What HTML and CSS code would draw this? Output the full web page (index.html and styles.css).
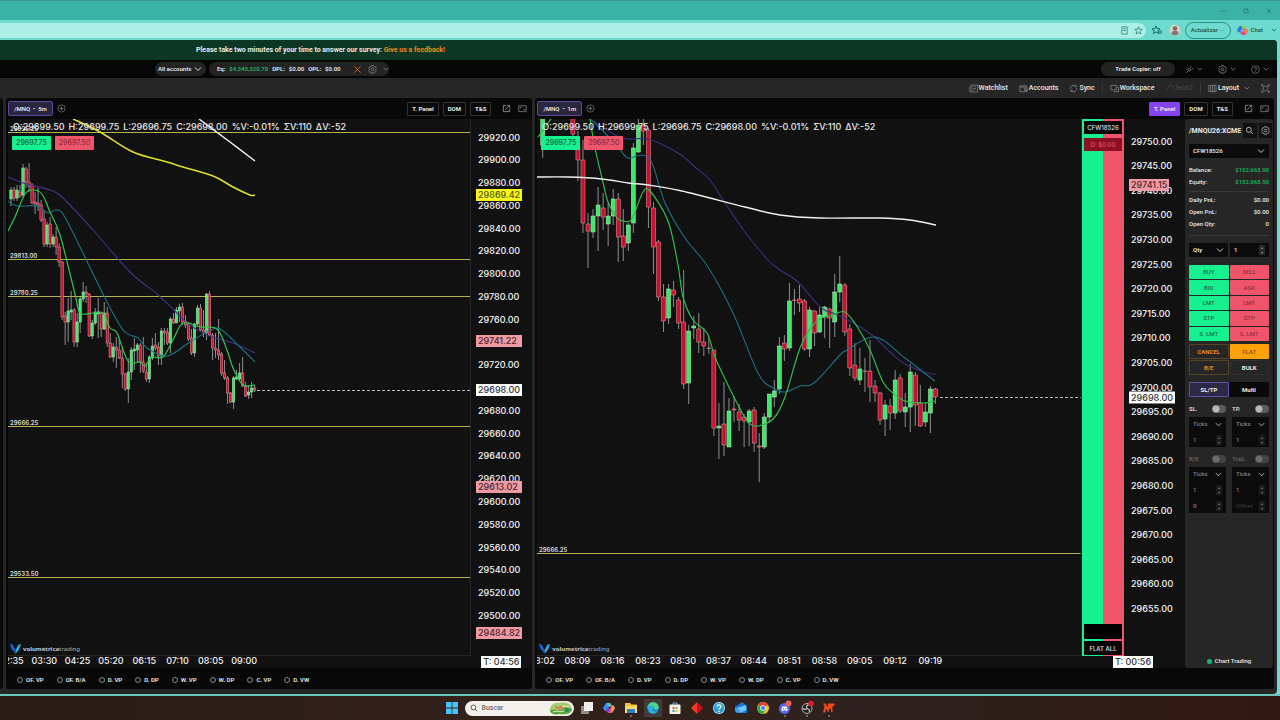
FILE: index.html
```html
<!DOCTYPE html>
<html lang="en">
<head>
<meta charset="utf-8">
<title>Volumetrica Trading</title>
<link rel="stylesheet" href="styles.css">
</head>
<body>
<svg class="defs" aria-hidden="true">
  <symbol id="chev" viewBox="0 0 8 8"><path d="M1 2.5 4 5.5 7 2.5" fill="none" stroke="currentColor"/></symbol>
  <symbol id="gear" viewBox="0 0 10 10"><path d="M3.8.8h2.4l.5 1.3 1.4-.2 1.1 2L8.300 5l.9 1.100-1.100 2-1.400-.2-.5 1.300H3.800l-.5-1.300-1.400.2-1.100-2L1.700 5l-.9-1.100 1.100-2 1.400.2z" fill="none" stroke="currentColor" stroke-width=".8"/><circle cx="5" cy="5" r="1.500" fill="none" stroke="currentColor" stroke-width=".8"/></symbol>
  <symbol id="plus" viewBox="0 0 10 10"><circle cx="5" cy="5" r="4" fill="none" stroke="currentColor" stroke-width=".7"/><path d="M5 3v4M3 5h4" stroke="currentColor" stroke-width=".8"/></symbol>
  <symbol id="open" viewBox="0 0 10 10"><path d="M5 1.500H1.500v7h7V5M6 1.500h2.500V4M3.500 6.500l5-5" fill="none" stroke="currentColor"/></symbol>
  <symbol id="expand" viewBox="0 0 10 10"><path d="M.8 2h8.400v6.500H.8zM2.500 5V3.700H4M7.500 5.500v1.300H6" fill="none" stroke="currentColor" stroke-width=".8"/></symbol>
  <symbol id="logo" viewBox="0 0 12 12"><path d="M0 1l3 1 3 6v4L2 7z" fill="#2563d8"/><path d="M12 1 9 2 6 8v4l4-5z" fill="#28a9dc"/><path d="M2 6l4 3v3z" fill="#123c86"/></symbol>
</svg>

<header class="titlebar">
  <button class="win" aria-label="Minimize"><svg viewBox="0 0 8 8"><path d="M1.500 4h5" stroke="currentColor" stroke-width=".7"/></svg></button>
  <button class="win" aria-label="Maximize"><svg viewBox="0 0 8 8"><path d="M2 2h4v4H2z" fill="none" stroke="currentColor" stroke-width=".7"/></svg></button>
  <button class="win" aria-label="Close"><svg viewBox="0 0 8 8"><path d="M2 2l4 4M6 2 2 6" stroke="currentColor" stroke-width=".7"/></svg></button>
</header>
<div class="address">
  <div class="field">
    <svg viewBox="0 0 10 10"><path d="M2 1h6v8H2zM3.500 3.200h3M3.500 5h3" fill="none" stroke="#1c7a70" stroke-width=".8"/></svg>
    <svg viewBox="0 0 10 10"><path d="M5 .8 6.200 3.600l3 .2-2.300 2 .8 3L5 7.200 2.300 8.800l.8-3-2.300-2 3-.2z" fill="none" stroke="#1c7a70" stroke-width=".8"/></svg>
  </div>
  <svg class="fav" viewBox="0 0 10 10"><path d="M4 1 5 3.500l3 .2L6 5.500l.6 3L4 7 1.500 8.500 2 5.500 0 4l3-.5zM7 6h3M7 8h3" fill="none" stroke="#125f57" stroke-width=".9"/></svg>
  <svg class="avatar" viewBox="0 0 12 12"><circle cx="6" cy="6" r="5.500" fill="#d5cfc9"/><circle cx="6" cy="4.500" r="2.200" fill="#87605a"/><path d="M2.500 10a3.500 3.200 0 0 1 7 0 5.500 5.500 0 0 1-7 0" fill="#8d6f73"/></svg>
  <button class="update">Actualizar ···</button>
  <button class="chat"><svg viewBox="0 0 12 12"><path d="M3 1h4l2 4H5L4 8H1L0 5z" fill="#2c7be5"/><path d="M5 1h3l1 4H6z" fill="#8ad14d"/><path d="M9 11H5L3 7h4l1-3h3l1 3z" fill="#e0489b"/><path d="M9 4h2l1 3-2 3-2-2z" fill="#f08a3c"/></svg>Chat</button>
  <svg class="chev teal"><use href="#chev"/></svg>
</div>

<main class="app">
  <div class="survey">Please take two minutes of your time to answer our survey: <a href="#">Give us a feedback!</a></div>
  <div class="topbar">
    <button class="pill accounts">All accounts <svg class="chev"><use href="#chev"/></svg></button>
    <div class="pill totals"><span>Eq:</span><span class="pos">$4,345,320.70</span><span>DPL:</span><span>$0.00</span><span>OPL:</span><span>$0.00</span>
      <svg class="ico orange" viewBox="0 0 10 10"><path d="M1.500 1.500l7 7M8.500 1.500l-7 7" stroke="currentColor"/></svg><svg class="ico"><use href="#gear"/></svg><svg class="chev small"><use href="#chev"/></svg></div>
    <button class="pill copier">Trade Copier: off</button>
    <button class="drop" aria-label="Connection"><svg class="ico" viewBox="0 0 10 10"><path d="M1.500 8.500 3 7M3 5l2 2 1.500-1.500-2-2zM5.500 3 7 1.500M7.500 5 9 3.500" fill="none" stroke="currentColor"/></svg><svg class="chev small"><use href="#chev"/></svg></button>
    <button class="drop" aria-label="Settings"><svg class="ico"><use href="#gear"/></svg><svg class="chev small"><use href="#chev"/></svg></button>
    <button class="drop" aria-label="Help"><svg class="ico" viewBox="0 0 10 10"><circle cx="5" cy="5" r="4.300" fill="none" stroke="currentColor" stroke-width=".7"/><path d="M3.700 4c0-1.700 2.600-1.700 2.600 0 0 .9-1.300 1-1.300 2M5 7v.8" fill="none" stroke="currentColor" stroke-width=".8"/></svg><svg class="chev small"><use href="#chev"/></svg></button>
  </div>
  <nav class="toolbar">
    <button><svg class="ico" viewBox="0 0 10 10"><path d="M2.500 1h7v8H1V3h1.500zM2.500 3v6M4 3h4M4 5h4M4 7h3" fill="none" stroke="currentColor" stroke-width=".7"/></svg>Watchlist</button>
    <button><svg class="ico" viewBox="0 0 10 10"><path d="M1 2v6.500h8V3.500H2.500L1 2h7v1.500M6 5.500h3M6 5v2h3" fill="none" stroke="currentColor" stroke-width=".8"/></svg>Accounts</button>
    <button><svg class="ico" viewBox="0 0 10 10"><path d="M1.500 5.500a3.500 3.500 0 0 1 6-3M8.500 4.500a3.500 3.500 0 0 1-6 3M6 3h2V1M4 7H2v2" fill="none" stroke="currentColor" stroke-width=".8"/></svg>Sync</button>
    <i class="sep"></i>
    <button><svg class="ico" viewBox="0 0 10 10"><path d="M1 1.500h6v5H1zM8 3.500h1.500v5H4" fill="none" stroke="currentColor" stroke-width=".8"/></svg>Workspace</button>
    <button class="dim"><svg class="ico" viewBox="0 0 10 10"><path d="M2 7a2 2 0 0 1 1-3.500 2.500 2.500 0 0 1 5 .5 1.700 1.700 0 0 1 0 3" fill="none" stroke="currentColor"/></svg>leon2</button>
    <i class="sep"></i>
    <button><svg class="ico" viewBox="0 0 10 10"><path d="M1 1.500h8v7H1zM3 1.500v7M5 1.500v7M7 1.500v7" fill="none" stroke="currentColor" stroke-width=".8"/></svg>Layout <svg class="chev small"><use href="#chev"/></svg></button>
    <button aria-label="Full screen"><svg class="ico" viewBox="0 0 10 10"><path d="M2.500 2.500h5v5h-5zM.8.8l1.700 1.700M9.200.8 7.500 2.500M.8 9.200l1.700-1.700M9.200 9.200 7.500 7.500M.8 2.500V.8h1.700M7.500.8h1.700v1.700M.8 7.500v1.700h1.700M7.500 9.200h1.700V7.500" fill="none" stroke="currentColor" stroke-width=".7"/></svg></button>
  </nav>

  <div class="workspace">
    <div class="edge"></div>
    <section class="panel five">
      <div class="head"><button class="tab">/MNQ &nbsp;•&nbsp; 5m</button><button class="bare" aria-label="Add chart"><svg class="ico"><use href="#plus"/></svg></button><span class="grow"></span>
        <button class="box">T. Panel</button><button class="box">DOM</button><button class="box">T&amp;S</button>
        <button class="bare open" aria-label="Open"><svg class="ico"><use href="#open"/></svg></button><button class="bare" aria-label="Expand"><svg class="ico"><use href="#expand"/></svg></button></div>
      <div class="body">
        <div class="plot"><svg id="plot5"></svg>
          <div class="readout"><span>O:29699.50</span><span>H:29699.75</span><span>L:29696.75</span><span>C:29698.00</span><span>%V:-0.01%</span><span>ΣV:110</span><span>ΔV:-52</span></div>
          <div class="quotes"><button class="ask">29697.75</button><button class="bid">29697.50</button></div>
          <div class="brand"><svg><use href="#logo"/></svg><span><b>volumetrica</b>trading</span></div>
        </div>
        <div class="axis"><svg id="axis5"></svg></div>
      </div>
      <div class="times"><svg id="time5"></svg><span class="count">T: 04:56</span></div>
      <div class="studies"></div>
    </section>

    <section class="panel one">
      <div class="head"><button class="tab">/MNQ &nbsp;•&nbsp; 1m</button><button class="bare" aria-label="Add chart"><svg class="ico"><use href="#plus"/></svg></button><span class="grow"></span>
        <button class="box on">T. Panel</button><button class="box">DOM</button><button class="box">T&amp;S</button>
        <button class="bare open" aria-label="Open"><svg class="ico"><use href="#open"/></svg></button><button class="bare" aria-label="Expand"><svg class="ico"><use href="#expand"/></svg></button></div>
      <div class="split">
        <div class="left">
          <div class="body">
            <div class="plot"><svg id="plot1"></svg>
              <div class="readout"><span>O:29699.50</span><span>H:29699.75</span><span>L:29696.75</span><span>C:29698.00</span><span>%V:-0.01%</span><span>ΣV:110</span><span>ΔV:-52</span></div>
              <div class="quotes"><button class="ask">29697.75</button><button class="bid">29697.50</button></div>
              <div class="brand"><svg><use href="#logo"/></svg><span><b>volumetrica</b>trading</span></div>
            </div>
            <div class="ladder"><span class="acct">CFW18526</span><span class="day">D: $0.00</span><span class="grow"></span><span class="blank"></span><button class="acct flatall">FLAT ALL</button></div>
            <div class="axis"><svg id="axis1"></svg></div>
          </div>
          <div class="times"><svg id="time1"></svg><span class="count">T: 00:56</span></div>
        </div>
        <aside class="ticket">
          <div class="symbol"><b>/MNQU26:XCME</b><button aria-label="Search"><svg class="ico" viewBox="0 0 10 10"><circle cx="4.300" cy="4.300" r="2.800" fill="none" stroke="currentColor"/><path d="M6.500 6.500 9 9" stroke="currentColor"/></svg></button><button aria-label="Ticket settings"><svg class="ico"><use href="#gear"/></svg></button></div>
          <select class="dd acctsel" aria-label="Account"><option>CFW18526</option></select>
          <dl class="stats"><dt>Balance:</dt><dd class="pos">$152,963.90</dd><dt>Equity:</dt><dd class="pos">$152,963.90</dd></dl>
          <dl class="stats"><dt>Daily PnL:</dt><dd>$0.00</dd><dt>Open PnL:</dt><dd>$0.00</dd><dt>Open Qty:</dt><dd>0</dd></dl>
          <div class="pair qty"><select class="dd" aria-label="Quantity type"><option>Qty</option></select><span class="num"><input aria-label="Quantity" value="1"><i>▴<br>▾</i></span></div>
          <div class="orders">
            <button class="g">BUY</button><button class="r">SELL</button><button class="g">BID</button><button class="r">ASK</button><button class="g">LMT</button><button class="r">LMT</button><button class="g">STP</button><button class="r">STP</button><button class="g">S. LMT</button><button class="r">S. LMT</button>
          </div>
          <div class="actions"><button class="cancel">CANCEL</button><button class="flat">FLAT</button><button class="cancel">B/E</button><button class="bulk">BULK</button></div>
          <div class="modes"><button class="sel">SL/TP</button><button>Multi</button></div>
          <div class="bracket">
            <div><label>SL.<input type="checkbox" class="switch"></label><div class="group"><select class="dd" aria-label="SL unit"><option>Ticks</option></select><span class="num"><input aria-label="SL value" value="1"><i>▴<br>▾</i></span></div></div>
            <div><label>TP.<input type="checkbox" class="switch"></label><div class="group"><select class="dd" aria-label="TP unit"><option>Ticks</option></select><span class="num"><input aria-label="TP value" value="1"><i>▴<br>▾</i></span></div></div>
          </div>
          <div class="bracket off">
            <div><label>B/E<input type="checkbox" class="switch"></label><div class="group"><select class="dd" aria-label="B/E unit"><option>Ticks</option></select><span class="num"><input aria-label="B/E value" value="1"><i>▴<br>▾</i></span><span class="num"><input aria-label="B/E offset" value="0"><i>▴<br>▾</i></span></div></div>
            <div><label>Trail.<input type="checkbox" class="switch"></label><div class="group"><select class="dd" aria-label="Trail unit"><option>Ticks</option></select><span class="num"><input aria-label="Trail value" value="1"><i>▴<br>▾</i></span><span class="num"><input aria-label="Trail offset" placeholder="Offset"><i>▴<br>▾</i></span></div></div>
          </div>
          <div class="status"><i></i>Chart Trading</div>
        </aside>
      </div>
      <div class="studies"></div>
    </section>
  </div>
</main>

<footer class="taskbar">
  <svg viewBox="0 0 12 12"><path d="M0 0h5.600v5.600H0zM6.400 0H12v5.600H6.400zM0 6.400h5.600V12H0zM6.400 6.400H12V12H6.400z" fill="#47c3f5"/></svg>
  <div class="search"><svg viewBox="0 0 10 10"><circle cx="4.300" cy="4.300" r="3" fill="none" stroke="#333"/><path d="M6.500 6.500 9 9" stroke="#333"/></svg><input placeholder="Buscar" aria-label="Buscar">
    <svg class="art" viewBox="0 0 26 14"><path d="M2 10C1 5 6 1 11 2c6-2 12 1 13 6-1 5-8 6-13 5-4 1-8 0-9-3z" fill="#a4cf74"/><path d="M2 10c4-4 8 2 12-2s7-1 10 0c0 5-8 6-13 5-4 1-8 0-9-3z" fill="#55a541"/><path d="M6 4l4 2 4-2 3 3-4 2-5-1z" fill="#cf8a5a"/><path d="M5 11c4-2 7 1 11-1M14 5l7 1" stroke="#e7f2c0" fill="none"/><circle cx="19" cy="9" r="2" fill="#2f8c57"/></svg></div>
  <svg viewBox="0 0 12 12"><path d="M0 4h8v8H0z" fill="#8e8a88"/><path d="M3 0h9v9H3z" fill="#f1efee"/></svg>
  <svg viewBox="0 0 12 12"><path d="M3 1h4l2 3-4 1-1 4H2L0 6z" fill="#3a8ff0"/><path d="M7 1l2 3-4 1-1-4z" fill="#53c6c2"/><path d="M9 11H5L3 8l4-1 1-4h2l2 3z" fill="#df4b94"/><path d="M10 3l2 3-3 5-1-4z" fill="#f3a23e"/><path d="M2 9l3-4 2 2-1 3z" fill="#7546d3"/></svg>
  <svg class="run" viewBox="0 0 12 12"><path d="M0 1h5l1.500 1.500H12V11H0z" fill="#f4bd32"/><path d="M0 4h12v7H0z" fill="#ffd86a"/><path d="M2 7h8v4H2z" fill="#2d7fd0"/><path d="M5 14h2" stroke="#aaa"/></svg>
  <svg class="run current" viewBox="0 0 12 12"><circle cx="6" cy="6" r="5.800" fill="#1b7fcf"/><path d="M.3 5C1 1.500 4-.3 7 .3c3 .5 5 3 4.800 5.500C11 8 8 8 7 7c1-2-1-3.500-3-3S1 5 .3 5z" fill="#52d38f"/><path d="M.3 5c2-3 7-2 6.500 1C5 6 5 9 8 9.500c1 .2 2-.1 3-.6-2 3-6 3.500-8.500 1.600" fill="#2ab6dc"/><path d="M2 14.500h8" stroke="#6cc6e8"/></svg>
  <svg viewBox="0 0 12 12"><path d="M4 3V1h4v2" fill="none" stroke="#5cb8e8"/><rect x=".5" y="2.500" width="11" height="9.500" rx="1" fill="#f5f3f0"/><path d="M3.500 5h2v2h-2z" fill="#ee5b35"/><path d="M6.500 5h2v2h-2z" fill="#6eb83c"/><path d="M3.500 8h2v2h-2z" fill="#2a9de0"/><path d="M6.500 8h2v2h-2z" fill="#f5b722"/></svg>
  <svg viewBox="0 0 12 12"><path d="M6 0v12L0 6z" fill="#f03a24"/><path d="M6 0l6 6-6 6z" fill="#c90f22"/></svg>
  <svg viewBox="0 0 12 12"><circle cx="6" cy="6" r="6" fill="#d7edf7"/><circle cx="6" cy="6" r="5.300" fill="#27a0d4"/><path d="M4.200 4.700c0-2.600 3.700-2.300 3.700-.2C7.900 6 6 5.800 6 7.500M6 8.800V10" fill="none" stroke="#fff" stroke-width="1.300"/></svg>
  <svg viewBox="0 0 12 12"><path d="M0 5l7-5 5 4v7H2L0 9z" fill="#1977d2"/><path d="M2 6l9-3v5l-6 3z" fill="#6cc8f4"/><path d="M0 5l6 4-4 2-2-2z" fill="#3a9cec"/></svg>
  <svg viewBox="0 0 12 12"><circle cx="6" cy="6" r="6" fill="#f3c32e"/><path d="M6 6 .8 3A6 6 0 0 1 11.200 3z" fill="#df4335"/><path d="M6 6 .8 3A6 6 0 0 0 6 12l3-5z" fill="#34a353"/><circle cx="6" cy="6" r="2.800" fill="#fff"/><circle cx="6" cy="6" r="2.100" fill="#3f7fe8"/></svg>
  <svg class="run" viewBox="0 0 12 12"><circle cx="5.500" cy="6.500" r="5.500" fill="#5865e8"/><path d="M2.500 8.500C2.500 6 3 4.500 4 4.500h3c1 0 1.500 1.500 1.500 4l-1.500.8-.6-1H4.600l-.6 1z" fill="#fff"/><circle cx="4.400" cy="6.800" r=".7" fill="#5865e8"/><circle cx="6.600" cy="6.800" r=".7" fill="#5865e8"/><circle cx="9.500" cy="1.500" r="3" fill="#e8605f"/><path d="M5 14h2" stroke="#aaa"/></svg>
  <svg class="run" viewBox="0 0 12 12"><circle cx="6" cy="6.500" r="5" fill="#1d1d1f" stroke="#b9b7b5"/><path d="M6 6.500C5 4 6 2.500 8 3M6 6.500c2.500.5 3 2 2 3.500M6 6.500C4 8 2.500 7.500 2 6" fill="none" stroke="#c9c7c5" stroke-width="1.200"/><circle cx="10" cy="1.500" r="2.800" fill="#dc1f26"/><path d="M5 14h2" stroke="#aaa"/></svg>
  <svg class="run" viewBox="0 0 12 12"><path d="M0 1.500h2.500L5 5V1.500h7L11 4H9.500v6.500L8 10V7L6.500 6.500l-1 4L3 6.500l-.5 4H0L1.500 4z" fill="#ee4a1c"/><path d="M5 14h2" stroke="#aaa"/></svg>
</footer>
<script src="chart.js"></script>
</body>
</html>
```
FILE: styles.css
```css
* { box-sizing: border-box; }
body { margin: 0; height: 100vh; display: flex; flex-direction: column; overflow: hidden; background: #6ddbcd; font: 500 6px/8px Roboto, "Liberation Sans", sans-serif; color: #e8e8e8; }
button, input, select { font: inherit; color: inherit; background: none; border: 0; padding: 0; margin: 0; min-width: 0; }
button { white-space: nowrap; }
svg { display: block; flex: none; }
a { text-decoration: none; }
.defs { position: absolute; width: 0; height: 0; }
.grow { flex: 1; }
.ico { width: 9px; height: 9px; color: #8d8d8d; }
.chev { width: 8px; height: 8px; }
.chev.small { width: 6px; height: 6px; color: #8d8d8d; }
.pos { color: #20b963; }

.titlebar { flex: none; height: 20px; background: #3bb2a6; border-top: 1px solid #3c9c92; display: flex; justify-content: flex-end; align-items: center; gap: 15px; padding-right: 7px; color: #1b7168; }
.win svg { width: 8px; height: 8px; }
.address { flex: none; height: 20px; display: flex; align-items: center; background: #6ddbcd; padding-right: 3px; color: #17514b; }
.field { flex: 1; height: 15px; background: #adefe6; border-radius: 0 8px 8px 0; display: flex; align-items: center; justify-content: flex-end; gap: 5px; padding-right: 3px; }
.field svg { width: 9px; height: 9px; }
.fav { width: 10px; height: 10px; margin-left: 6px; }
.avatar { width: 12px; height: 12px; margin: 0 4px 0 7px; }
.update { height: 17px; width: 46px; border: 1px solid #2a8c80; border-radius: 9px; }
.chat { display: flex; align-items: center; gap: 3px; margin: 0 8px 0 6px; }
.chat svg { width: 11px; height: 11px; }
.chev.teal { width: 6px; height: 6px; }

.app { flex: 1; min-height: 0; display: flex; flex-direction: column; background: #262626; margin-right: 3px; border-radius: 0 4px 4px 0; overflow: hidden; }
.survey { flex: none; height: 20px; background: #0d3725; padding-left: 196px; font-size: 7px; line-height: 20px; font-weight: 700; }
.survey a { color: #e88a1c; }
.topbar { flex: none; height: 18px; background: #060606; display: flex; align-items: center; padding: 0 8px 0 155px; }
.pill { height: 14px; border-radius: 7px; background: #232323; display: flex; align-items: center; font-weight: 600; }
.accounts { width: 51px; justify-content: space-between; padding: 0 4px 0 3px; }
.totals { width: 180px; gap: 4px; padding: 0 8px; margin: 0 auto 0 3px; }
.totals .orange { color: #c9742a; margin-left: 8px; }
.totals .ico { margin-right: 2px; }
.copier { width: 74px; justify-content: center; margin-right: 5px; }
.drop { display: flex; align-items: center; gap: 3px; margin-left: 5px; width: 18px; }
.drop + .drop { margin-left: 15px; }
.toolbar { flex: none; height: 20px; display: flex; align-items: center; justify-content: flex-end; gap: 11px; padding-right: 7px; font-size: 7px; }
.toolbar button { display: flex; align-items: center; gap: 1px; }
.toolbar button .chev { margin-left: 4px; }
.toolbar .sep { width: 1px; height: 10px; background: #3a3a3a; margin: 0 -4px; }
.toolbar .dim, .toolbar .dim .ico { color: #454545; }

.workspace { flex: 1; min-height: 0; display: flex; gap: 3px; padding: 0 3px 5px 0; }
.edge { width: 3px; background: #0a0a0a; border-radius: 0 3px 3px 0; }
.panel { min-width: 0; display: flex; flex-direction: column; background: #080808; border-radius: 3px; padding-left: 2px; }
.five { flex: 526; }
.one { flex: 739; }
.head { flex: none; height: 21px; display: flex; align-items: center; gap: 4px; padding-right: 5px; }
.tab { height: 15px; width: 45px; border: 1px solid #5c489c; border-radius: 2px; background: #2a2640; font-weight: 600; }
.head .box { height: 14px; padding: 0 4px; border: 1px solid #333; border-radius: 1px; font-weight: 700; }
.head .box.on { background: #8344f0; border-color: #8344f0; }
.bare.open { margin: 0 3px 0 7px; }
.body { flex: 1; min-height: 0; display: flex; background: #111; }
.plot { position: relative; flex: 1; min-width: 0; overflow: hidden; border-right: 1px solid #262626; border-bottom: 1px solid #262626; }
.plot > svg, .axis svg { width: 100%; height: 100%; position: absolute; inset: 0; }
.axis { flex: none; width: 61px; position: relative; }
.plot, .axis, .times, .ladder { font-family: Inter, "Liberation Sans", sans-serif; }
.axis text, .times text { font-size: 9px; fill: #f4f4f4; }
.plot text { font-size: 6px; font-weight: 600; fill: #ddd; }
.readout { position: absolute; top: 2px; left: 5px; display: flex; gap: 4px; font-size: 9px; line-height: 12px; white-space: nowrap; }
.quotes { position: absolute; top: 17px; left: 4px; display: flex; gap: 4px; font-size: 7px; }
.quotes button { width: 39px; height: 14px; border-radius: 1px; color: #17603f; background: #16f08f; }
.quotes .bid { background: #ee556b; color: #902c3c; }
.brand { position: absolute; left: 2px; bottom: 1px; display: flex; gap: 2px; align-items: center; color: #8fa0b4; font-family: "Noto Sans", sans-serif; }
.brand b { font-weight: 700; color: #c3ccd8; }
.brand svg { width: 11px; height: 11px; }
.times { flex: none; height: 12px; background: #111; position: relative; overflow: hidden; }
.times svg { width: 100%; height: 12px; }
.count { position: absolute; right: 11px; top: 0; width: 40px; height: 12px; background: #fff; color: #333; font-size: 9px; line-height: 12px; text-align: center; }
.one .count { right: 32px; }
.studies { flex: none; height: 21px; display: flex; align-items: center; gap: 13px; padding: 3px 0 0 9px; font-weight: 600; }
.studies label { display: flex; align-items: center; gap: 3px; }
.studies input { appearance: none; width: 6px; height: 6px; border: 1px solid #888; border-radius: 50%; }

.split { flex: 1; min-height: 0; display: flex; }
.left { flex: 1; min-width: 0; display: flex; flex-direction: column; }
.ladder { flex: none; width: 42px; display: flex; flex-direction: column; padding: 2px 2px 1px; background: linear-gradient(90deg, #16f08f 50%, #ee556b 50%); }
.ladder > * { text-align: center; line-height: 13px; }
.ladder .acct { height: 13px; background: #060606; color: #dfe4f2; }
.ladder .day { height: 13px; margin-top: 4px; background: #8c1023; color: #e2576c; }
.ladder .blank { height: 15px; background: #000; margin-bottom: 2px; }
.ladder .flatall { height: 14px; }

.ticket { flex: none; width: 88px; background: #262626; border-radius: 3px; margin-right: 1px; padding: 4px 4px 3px; display: flex; flex-direction: column; }
.symbol { display: flex; align-items: center; height: 15px; gap: 2px; margin-right: -3px; }
.symbol b { font-size: 7px; font-weight: 700; flex: 1; }
.symbol button { width: 14px; height: 15px; background: #101010; display: grid; place-items: center; }
.symbol .ico { color: #bbb; }
.dd { appearance: none; height: 14px; width: 100%; padding: 0 4px; font-weight: 600; border-radius: 1px; background: #0b0b0b url("data:image/svg+xml,%3Csvg xmlns='http://www.w3.org/2000/svg' viewBox='0 0 8 8'%3E%3Cpath d='M1 2.500 4 5.500 7 2.500' fill='none' stroke='%23ccc'/%3E%3C/svg%3E") no-repeat right 4px center / 8px 8px; }
.acctsel { margin: 6px 0; }
.stats { margin: 0; display: grid; grid-template-columns: auto auto; line-height: 12px; padding-bottom: 3px; margin-bottom: 2px; border-bottom: 1px solid #383838; }
.stats dd { margin: 0; text-align: right; }
.stats + .stats { padding-bottom: 5px; }
.pair, .bracket, .modes, .actions { display: grid; grid-template-columns: 1fr 1fr; gap: 2px; }
.qty { margin: 5px 0 8px; }
.num { display: flex; align-items: center; height: 14px; background: #0b0b0b; padding: 0 4px; }
.num input { flex: 1; width: 0; outline: 0; }
.num input::placeholder { color: #333; }
.num i { font: 4px/5px "DejaVu Sans", sans-serif; color: #999; background: #2a2a2a; padding: 0 2px; }
.orders { display: grid; grid-template-columns: 1fr 1fr; gap: 1px; height: 76px; margin-bottom: 3px; }
.orders button { border-radius: 1px; }
.g { background: #16f08f; color: #17704a; }
.r { background: #ee556b; color: #962e3f; }
.actions { gap: 1px; margin-bottom: 7px; }
.actions button, .modes button { height: 15px; border-radius: 1px; font-weight: 700; }
.actions .cancel { border: 1px solid #554522; color: #ef8521; }
.actions .flat { background: #ffa20a; color: #9a5b05; }
.actions .bulk { border: 1px solid #2f2f2f; }
.modes { gap: 0; margin-bottom: 7px; }
.modes button { background: #080808; }
.modes .sel { background: #2d2843; border: 1px solid #6450a8; }
.bracket { gap: 6px; }
.bracket label { display: flex; justify-content: space-between; align-items: center; height: 10px; margin-bottom: 3px; }
.switch { appearance: none; width: 14px; height: 8px; border-radius: 4px; background: radial-gradient(circle at 4px 4px, #b8b8b8 3px, #5c5c5c 4px); }
.group { background: #0b0b0b; color: #858585; }
.group .dd { display: block; background-color: transparent; background-size: 7px 7px; font-weight: 500; }
.group .num { background: none; margin-top: 2px; }
.group .num i { background: #1b1b1b; color: #777; }
.bracket.off { margin-top: 7px; color: #666; }
.off .switch { background: radial-gradient(circle at 4px 4px, #6b6b6b 3px, #444 4px); }
.status { margin-top: auto; display: flex; align-items: center; justify-content: center; gap: 3px; height: 8px; }
.status i { width: 5px; height: 5px; border-radius: 50%; background: #16b870; }

.taskbar { flex: none; height: 26px; background: linear-gradient(#6cc5b9 0 2px, transparent 2px), linear-gradient(90deg, #2b1c18, #33211a 40%, #2e211e 70%, #30190f); display: flex; align-items: center; justify-content: center; gap: 10px; padding-top: 2px; }
.taskbar > svg { width: 12px; height: 12px; }
.search { width: 109px; height: 15px; margin: 0 -3px 0 -3px; border-radius: 8px; background: #f4f1ed; display: flex; align-items: center; padding-left: 5px; gap: 4px; }
.search svg { width: 8px; height: 8px; }
.search input { flex: 1; width: 0; font-size: 7px; color: #555; }
.search input::placeholder { color: #666; }
.search .art { width: 26px; height: 14px; }
.taskbar .run { overflow: visible; }
.taskbar .current { outline: 3px solid #433a39; background: #433a39; }
```
FILE: chart.js
```js
const NS = 'http://www.w3.org/2000/svg';
function el(parent, name, attrs, text) {
  const n = document.createElementNS(NS, name);
  for (const k in attrs) n.setAttribute(k, attrs[k]);
  if (text !== undefined) n.textContent = text;
  parent.appendChild(n);
  return n;
}

// Candles: [slot, up, body top, body bottom, wick top, wick bottom]
const five = [
 [1,190,199,187,206],[0,190,198,187,201],[1,190,198,185,201],[0,192,196,185,198],[1,168,195,164,197],[0,169,182,167,188],[0,182,186,163,192],[0,185,203,183,204],[0,202,204,192,214],[0,203,205,188,211],
 [0,205,220,200,222],[0,219,244,210,247],[1,225,244,222,247],[0,224,244,217,248],[1,237,244,234,247],[0,237,247,227,255],[0,247,262,243,267],[0,262,317,261,320],[0,316,322,312,345],[1,311,322,298,342],
 [1,310,312,291,320],[0,310,342,308,347],[1,322,342,313,347],[1,299,322,297,333],[1,292,299,282,302],[0,292,294,286,303],[0,294,336,293,337],[1,323,336,320,339],[1,312,323,308,325],[1,312,314,298,338],
 [0,313,329,312,337],[1,313,329,302,330],[0,313,343,307,347],[0,343,357,333,358],[1,347,357,343,362],[0,347,350,337,368],[0,350,358,338,359],[0,358,374,348,388],[0,374,389,373,391],[1,372,389,358,403],
 [1,350,372,347,380],[1,349,351,338,370],[1,345,350,343,362],[0,345,362,343,373],[0,362,371,337,373],[0,372,379,363,382],[1,357,379,355,383],[1,346,358,338,360],[0,345,348,333,350],[0,347,356,342,365],
 [1,331,356,328,365],[0,331,333,328,345],[0,332,343,328,345],[1,319,343,317,353],[0,319,323,313,324],[1,310,323,307,323],[1,307,311,304,322],[0,307,322,303,325],[0,321,325,315,328],[0,324,339,322,341],
 [0,338,353,329,355],[1,324,353,323,357],[1,308,324,305,327],[0,308,330,304,332],[0,330,333,310,337],[1,294,333,293,340],[0,294,335,291,336],[0,335,348,333,360],[0,348,350,333,358],[0,350,355,319,360],
 [0,354,373,352,376],[0,373,378,360,380],[0,378,393,376,404],[0,393,402,392,403],[1,378,402,376,409],[1,377,379,370,380],[1,373,379,363,380],[0,373,386,357,387],[0,386,396,382,397],[1,392,395,385,399],[1,388,392,382,398],[0,388,390,385,392]
].map((c, i) => [i, ...c]);
const one = [[0,1,110,145,110,158],
 ...[[0,110,134,110,140],[0,147,160,131,181],[0,160,223,140,233],[0,224,231,213,268],[1,216,232,209,238],[1,205,216,187,251],[0,208,217,193,230],[1,216,224,203,246],[1,199,216,189,225],[0,199,237,193,262],[0,236,247,209,261],[1,225,243,223,251],[1,148,223,143,233],[1,125,152,112,153],[0,125,131,119,145],[0,130,207,128,228],[0,208,247,202,274],[0,242,297,240,301],
 [0,297,321,284,332],[1,289,318,284,324],[0,290,295,281,307],[0,300,323,297,329],[0,322,384,270,389],[1,331,383,325,404],[1,326,328,316,339],[0,329,342,313,353],[0,342,346,328,356],[0,348,348,337,354],[0,350,428,350,436],[1,426,428,403,459],[0,424,445,382,456],[1,411,447,398,447],[0,409,410,396,422],[0,412,420,404,431],[0,417,421,414,447],[1,411,422,409,446],[0,410,443,407,452],[0,446,447,433,482],[1,417,447,413,449],
 [1,394,417,394,423],[1,391,397,380,407],[1,346,389,337,394],[0,343,349,335,361],[1,301,348,283,351],[0,300,300,289,315],[0,299,303,285,312],[0,301,349,299,351],[1,310,349,307,357],[0,311,333,310,346],[1,315,332,307,333],[1,307,317,306,338],[0,309,318,308,348],[1,292,322,274,337],[1,284,292,256,302],[0,285,332,283,336],
 [0,329,368,324,376],[0,365,378,343,381],[1,369,380,348,385],[0,371,371,358,392],[0,371,387,340,402],[0,386,393,380,402],[0,393,420,392,425],[1,405,419,400,436],[0,406,413,399,430],[1,380,413,370,419],[0,378,411,374,413],[1,407,412,393,427],[1,372,407,364,432],[0,375,405,372,426],[0,403,426,385,427],[1,412,422,403,427],[1,389,413,386,433],[0,389,397,388,404]].map((c, i) => [i + 6, ...c])];

function smooth(points) {
  const p = points.split(' ').map(s => s.split(',').map(Number));
  let d = `M${p[0]}`;
  for (let i = 1; i < p.length; i++) {
    const a = p[i - 2] || p[i - 1], b = p[i - 1], c = p[i], e = p[i + 1] || c;
    d += `C${b[0] + (c[0] - a[0]) / 6},${b[1] + (c[1] - a[1]) / 6} ${c[0] - (e[0] - b[0]) / 6},${c[1] - (e[1] - b[1]) / 6} ${c}`;
  }
  return d;
}

function drawPlot(id, o) {
  const svg = document.getElementById(id);
  for (const [y, label] of o.levels) {
    el(svg, 'line', { x1: 0, x2: '100%', y1: y - o.top, y2: y - o.top, stroke: '#b4b352' });
    el(svg, 'text', { x: 2, y: y - o.top - 2 }, label);
  }
  el(svg, 'line', { x1: o.lastX - o.left, x2: '100%', y1: o.lastY - o.top, y2: o.lastY - o.top, stroke: '#bbb', 'stroke-dasharray': '3 2' });
  const g = el(svg, 'g', { transform: `translate(${-o.left} ${-o.top})` });
  for (const [i, up, t, b, h, l] of o.candles) {
    const x = o.start + i * o.step;
    el(g, 'line', { x1: x, x2: x, y1: h, y2: l, stroke: '#9c9c9c', 'stroke-width': o.wick });
    el(g, 'rect', { x: x - o.w / 2, y: t, width: o.w, height: Math.max(b - t, .6), fill: up ? '#3fe56c' : '#c8102e', stroke: up ? '#b4efbd' : '#e9a0a8', 'stroke-width': .5 });
  }
  for (const [color, width, pts] of o.lines) el(g, 'path', { d: smooth(pts), fill: 'none', stroke: color, 'stroke-width': width });
}

function drawAxis(id, first, last, price, step, y, dy, tags) {
  const svg = document.getElementById(id);
  for (let i = 0; y + i * dy <= last; i++) el(svg, 'text', { x: 7, y: y + i * dy + 3 - first }, (price - i * step).toFixed(2));
  for (const [ty, bg, fg, label] of tags) {
    el(svg, 'rect', { x: 5, y: ty - 6 - first, width: label === '29741.15' ? 40 : 46, height: 12, fill: bg });
    el(svg, 'text', { x: 7, y: ty + 3 - first, style: `fill:${fg}` }, label);
  }
}

function drawTimes(id, x, dx, labels) {
  const svg = document.getElementById(id);
  labels.split(' ').forEach((t, i) => el(svg, 'text', { x: x + i * dx, y: 8, 'text-anchor': 'middle' }, t));
}

drawPlot('plot5', { left: 8, top: 119, start: 11, step: 3.008, w: 2.4, wick: .9, candles: five, lastX: 257, lastY: 390.5,
  levels: [[132.5, '29925.25'], [259.5, '29813.00'], [296.5, '29780.25'], [426.5, '29666.25'], [577.5, '29533.50']],
  lines: [
    ['#41348a', 1.1, '8,177 23,183 53,191 67,202 93,230 130,272 157,294 173,309 187,323 207,335 233,343 255,353'],
    ['#1a7488', 1.1, '8,201 17,206 37,206 48,213 57,210 67,221 103,294 123,330 138,338 147,348 167,356 190,342 213,329 223,331 240,347 255,362'],
    ['#2fc750', 1.2, '8,231 15,217 25,194 33,190 42,194 50,212 60,235 75,294 80,313 93,313 103,313 110,328 117,333 128,361 140,362 145,366 152,357 163,357 173,340 183,323 200,327 217,329 227,350 233,368 243,385 255,385'],
    ['#dde02f', 1.6, '73,119 100,132 133,152 167,162 183,167 213,176 233,187 250,195 255,195'],
    ['#f0f0f0', 1.4, '199,119 230,142 255,161']] });
drawPlot('plot1', { left: 537, top: 119, start: 542.7, step: 5.035, w: 4, wick: .9, candles: one, lastX: 940, lastY: 397.5,
  levels: [[553.5, '29666.25']],
  lines: [
    ['#3b3080', 1.1, '590,119 622,138 648,139 678,153 695,167 710,180 725,203 745,232 768,260 780,270 798,282 820,307 835,314 850,321 872,335 890,352 905,364 927,373 936,374'],
    ['#1f6f84', 1.1, '590,119 602,130 618,147 628,158 642,155 652,163 665,203 685,238 708,267 733,313 758,373 773,388 785,392 800,386 814,383 840,355 847,350 868,338 883,340 905,358 935,381'],
    ['#2fbd4c', 1.2, '538,137 551,119'],
    ['#2fbd4c', 1.2, '590,119 595,148 602,178 608,202 617,218 623,221 630,221 635,212 643,192 650,191 668,221 678,265 683,297 693,320 707,333 715,357 727,383 737,403 748,422 758,426 774,418 785,397 800,348 813,325 822,318 833,315 845,312 858,328 870,350 883,382 893,393 905,401 923,403 935,401'],
    ['#f0f0f0', 1.4, '537,177 568,177 602,179 628,183 648,185 682,191 745,207 780,215 820,218 880,218 910,220 936,225']] });
drawAxis('axis5', 119, 617, 29920, 20, 137.5, 22.78, [[195, '#f7f71b', '#55560a', '29869.42'], [341, '#f09aa6', '#4b262c', '29741.22'], [390, '#fff', '#333', '29698.00'], [487, '#f09aa6', '#4b262c', '29613.02'], [633, '#f09aa6', '#4b262c', '29484.82']]);
drawAxis('axis1', 119, 612, 29750, 5, 141.5, 24.6, [[185, '#f09aa6', '#4b262c', '29741.15'], [397.5, '#fff', '#333', '29698.00']]);
drawTimes('time5', 3, 33.3, '02:35 03:30 04:25 05:20 06:15 07:10 08:05 09:00');
drawTimes('time1', 5, 35.3, '08:02 08:09 08:16 08:23 08:30 08:37 08:44 08:51 08:58 09:05 09:12 09:19');

for (const row of document.querySelectorAll('.studies'))
  for (const name of ['OF. VP', 'OF. B/A', 'D. VP', 'D. DP', 'W. VP', 'W. DP', 'C. VP', 'D. VW']) {
    const label = document.createElement('label'), box = document.createElement('input');
    box.type = 'checkbox';
    label.append(box, name);
    row.append(label);
  }
```
